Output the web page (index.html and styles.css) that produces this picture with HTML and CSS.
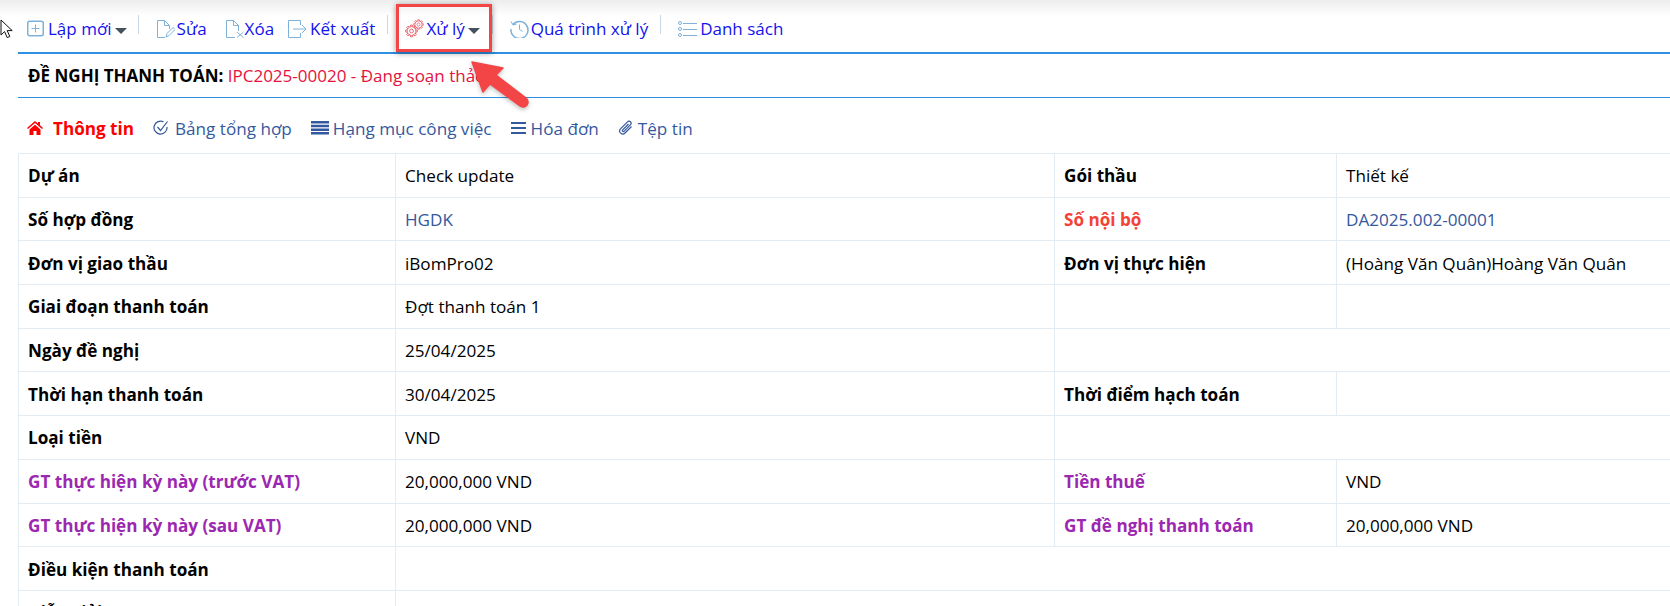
FILE: index.html
```html
<!DOCTYPE html>
<html lang="vi">
<head>
<meta charset="utf-8">
<title>Đề nghị thanh toán</title>
<link rel="stylesheet" href="styles.css">
</head>
<body>
<div class="topshade"></div>
<svg class="cursor" width="14" height="20" viewBox="0 0 14 20"><path d="M1 1v15l3.600-3.400 2.600 6 2.600-1.100-2.600-5.900h5z" fill="#fff" stroke="#111" stroke-width="1"/></svg>
<div class="page">
  <div class="toolbar">
    <a class="tool t-new"><svg class="ic" width="17" height="17" viewBox="0 0 17 17"><rect x=".75" y="1.250" width="15.500" height="14.500" rx="2" class="st thick"/><path d="M8.500 4.500v8M4.500 8.500h8" class="st"/></svg><span>Lập mới</span><i class="caret"></i></a>
    <i class="sep"></i>
    <a class="tool t-edit"><svg class="ic" width="19" height="18" viewBox="0 0 19 18"><path d="M9 17.500H1.500V.5h7l5 5V9M8.500.5v5h5" class="st"/><path d="M10 17l1-3.500 6-6 2 2-6 6z" class="st"/></svg><span>Sửa</span></a>
    <a class="tool t-del"><svg class="ic" width="19" height="18" viewBox="0 0 19 18"><path d="M10 17.500H1.500V.5h7l5 5V11M8.500.5v5h5" class="st"/><path d="M12 12l6.500 5.500M18.500 12L12 17.500" class="st"/></svg><span>Xóa</span></a>
    <a class="tool t-exp"><svg class="ic" width="19" height="18" viewBox="0 0 19 18"><path d="M12.500 5V.5H.5v17h12V13" class="st"/><path d="M5 9h13M14 5l4 4-4 4" class="st"/></svg><span>Kết xuất</span></a>
    <i class="sep"></i>
    <a class="tool t-proc"><svg class="ic" width="19" height="19" viewBox="0 0 19 19"><defs><g id="cog"><circle r="4.400"/><circle r="1.900"/><path id="tooth" d="M4.200-1.200L5.900-.9V.9L4.200 1.200"/><use href="#tooth" transform="rotate(45)"/><use href="#tooth" transform="rotate(90)"/><use href="#tooth" transform="rotate(135)"/><use href="#tooth" transform="rotate(180)"/><use href="#tooth" transform="rotate(225)"/><use href="#tooth" transform="rotate(270)"/><use href="#tooth" transform="rotate(315)"/></g></defs><g class="gear"><use href="#cog" transform="translate(6.500 12)"/><use href="#cog" transform="translate(13.500 5.500) scale(.82)"/></g></svg><span>Xử lý</span><i class="caret"></i></a>
    <i class="sep"></i>
    <a class="tool t-hist"><svg class="ic" width="19" height="18" viewBox="0 0 19 18"><path d="M3 4.500A8.500 8.500 0 1 1 1 9" class="st thick"/><path d="M1 1.500l2 3.500 3.500-1M9.500 4.500v5l3 2" class="st"/></svg><span>Quá trình xử lý</span></a>
    <i class="sep"></i>
    <a class="tool t-list"><svg class="ic" width="19" height="18" viewBox="0 0 19 18"><circle cx="2" cy="3" r="1.500" class="st"/><circle cx="2" cy="9" r="1.500" class="st"/><circle cx="2" cy="15" r="1.500" class="st"/><path d="M5 3.500h14M5 9.500h14M5 15.500h14" class="st"/></svg><span>Danh sách</span></a>
  </div>
  <div class="heading"><b>ĐỀ NGHỊ THANH TOÁN:</b> <span class="status">IPC2025-00020 - Đang soạn thảo</span></div>
  <div class="tabs">
    <a class="tab active"><svg width="16" height="14" viewBox="0 0 16 14"><path d="M8 0l3 2.500V1h2v3.200L16 7l-1 1-7-6-7 6-1-1zM2.500 8.500L8 3.800l5.500 4.700V14H9.500v-4h-3v4H2.500z" fill="#f00"/></svg><span>Thông tin</span></a>
    <a class="tab t-sum"><svg width="16" height="16" viewBox="0 0 16 16"><path d="M14 7A6.500 6.500 0 1 1 10.500 1.800" class="tst"/><path d="M4.500 7l3 3.500L14.500 1.500" class="tst"/></svg><span>Bảng tổng hợp</span></a>
    <a class="tab t-lines"><svg width="18" height="14" viewBox="0 0 18 14"><path d="M0 0h18v2.500H0zM0 3.700h18v2.500H0zM0 7.400h18v2.500H0zM0 11.100h18v2.500H0z" fill="#34589e"/></svg><span>Hạng mục công việc</span></a>
    <a class="tab"><svg width="15" height="14" viewBox="0 0 15 14"><path d="M0 1h15v2H0zM0 6h15v2H0zM0 11h15v2H0z" fill="#34589e"/></svg><span>Hóa đơn</span></a>
    <a class="tab t-file"><svg width="16" height="16" viewBox="0 0 16 16"><path d="M13.500 6.500L7 13a3 3 0 0 1-4.500-4.200l7-7a2 2 0 0 1 3 2.800l-6.500 6.800a1 1 0 0 1-1.500-1.300L10.500 4" class="tst"/></svg><span>Tệp tin</span></a>
  </div>
  <table class="info">
    <colgroup><col class="c1"><col class="c2"><col class="c3"><col class="c4"></colgroup>
    <tr><th>Dự án</th><td>Check update</td><th>Gói thầu</th><td>Thiết kế</td></tr>
    <tr><th>Số hợp đồng</th><td class="link">HGDK</td><th class="red">Số nội bộ</th><td class="link">DA2025.002-00001</td></tr>
    <tr><th>Đơn vị giao thầu</th><td>iBomPro02</td><th>Đơn vị thực hiện</th><td>(Hoàng Văn Quân)Hoàng Văn Quân</td></tr>
    <tr><th>Giai đoạn thanh toán</th><td>Đợt thanh toán 1</td><th></th><td></td></tr>
    <tr><th>Ngày đề nghị</th><td>25/04/2025</td><td colspan="2"></td></tr>
    <tr><th>Thời hạn thanh toán</th><td>30/04/2025</td><th>Thời điểm hạch toán</th><td></td></tr>
    <tr><th>Loại tiền</th><td>VND</td><td colspan="2"></td></tr>
    <tr><th class="pur">GT thực hiện kỳ này (trước VAT)</th><td>20,000,000 VND</td><th class="pur">Tiền thuế</th><td>VND</td></tr>
    <tr><th class="pur">GT thực hiện kỳ này (sau VAT)</th><td>20,000,000 VND</td><th class="pur">GT đề nghị thanh toán</th><td>20,000,000 VND</td></tr>
    <tr><th>Điều kiện thanh toán</th><td colspan="3"></td></tr>
    <tr><th>Diễn giải</th><td colspan="3"></td></tr>
  </table>
</div>
<div class="callout"></div>
<svg class="arrow" width="70" height="60" viewBox="0 0 70 60"><path d="M2 2L33 8L26 15L56 38a5 5 0 0 1-6 8L20 24L13 32z" fill="#f44546" stroke="#f44546" stroke-width="1.500" stroke-linejoin="round"/></svg>
</body>
</html>
```
FILE: styles.css
```css
html, body { margin: 0; padding: 0; }
body { width: 1670px; height: 606px; overflow: hidden; background: #fff; font-family: "Open Sans", sans-serif; font-size: 17px; color: #000; position: relative; }
.topshade { position: absolute; left: 0; top: 0; width: 100%; height: 16px; background: linear-gradient(#ededed, #fff); }
.cursor { position: absolute; left: 0; top: 19px; }
.page { position: relative; padding-left: 18px; }
.toolbar { height: 52px; display: flex; align-items: center; padding: 5px 0 0 9px; box-sizing: border-box; color: #1212ee; }
.tool { display: flex; align-items: center; gap: 3px; margin-right: 17px; }
.sep { width: 1px; height: 19px; background: #c9d8e6; margin: 0 17px 9px 0; }
.ic { flex: none; }
.st { fill: none; stroke: #7fb2da; stroke-width: 1; }
.st.thick { stroke-width: 1.500; }
.gear { fill: none; stroke: #e8606a; stroke-width: .9; }
.caret { width: 0; height: 0; border-left: 6px solid transparent; border-right: 6px solid transparent; border-top: 6px solid #44505c; margin: 4px 0 0 1px; }
.t-new { gap: 4px; margin-right: 11px; }
.t-new .caret { margin-left: -1px; }
.t-edit { gap: 2px; margin-right: 18px; }
.t-del { gap: 1px; margin-right: 14px; }
.t-exp { margin-right: 12px; }
.t-proc { gap: 2px; margin-right: 12px; }
.t-hist { gap: 2px; margin-right: 12px; }
.heading { height: 46px; border-top: 2px solid #2f8fe0; border-bottom: 1px solid #2f8fe0; box-sizing: border-box; line-height: 43px; padding-left: 10px; }
.status { color: #e4123c; }
.tabs { height: 55px; display: flex; align-items: center; gap: 19px; padding: 5px 0 0 9px; box-sizing: border-box; color: #34589e; font-size: 17.120px; }
.tab { display: flex; align-items: center; gap: 5px; }
.tab.active { color: #f00; font-weight: 700; gap: 10px; }
.tab.t-sum { gap: 6px; }
.tab.t-lines { gap: 4px; }
.tab.t-file { gap: 4px; }
.tst { fill: none; stroke: #34589e; stroke-width: 1.200; }
.info { border-collapse: collapse; table-layout: fixed; width: 1652px; font-size: 17.120px; }
.c1 { width: 377px; } .c2 { width: 659px; } .c3 { width: 282px; } .c4 { width: 334px; }
.info th, .info td { border: 1px solid #e3ebf3; height: 43.700px; padding: 1px 9px 0; text-align: left; box-sizing: border-box; white-space: nowrap; vertical-align: middle; }
.info th { font-weight: 700; }
.info .link { color: #34589e; }
.info .red { color: #f44336; }
.info .pur { color: #9c27b0; }
.callout { position: absolute; left: 396px; top: 4px; width: 96px; height: 48px; box-sizing: border-box; border: 3px solid #f44546; box-shadow: 0 1px 6px rgba(0,0,0,.4); }
.arrow { position: absolute; left: 470px; top: 60px; filter: drop-shadow(0 2px 2px rgba(0,0,0,.25)); }
```
